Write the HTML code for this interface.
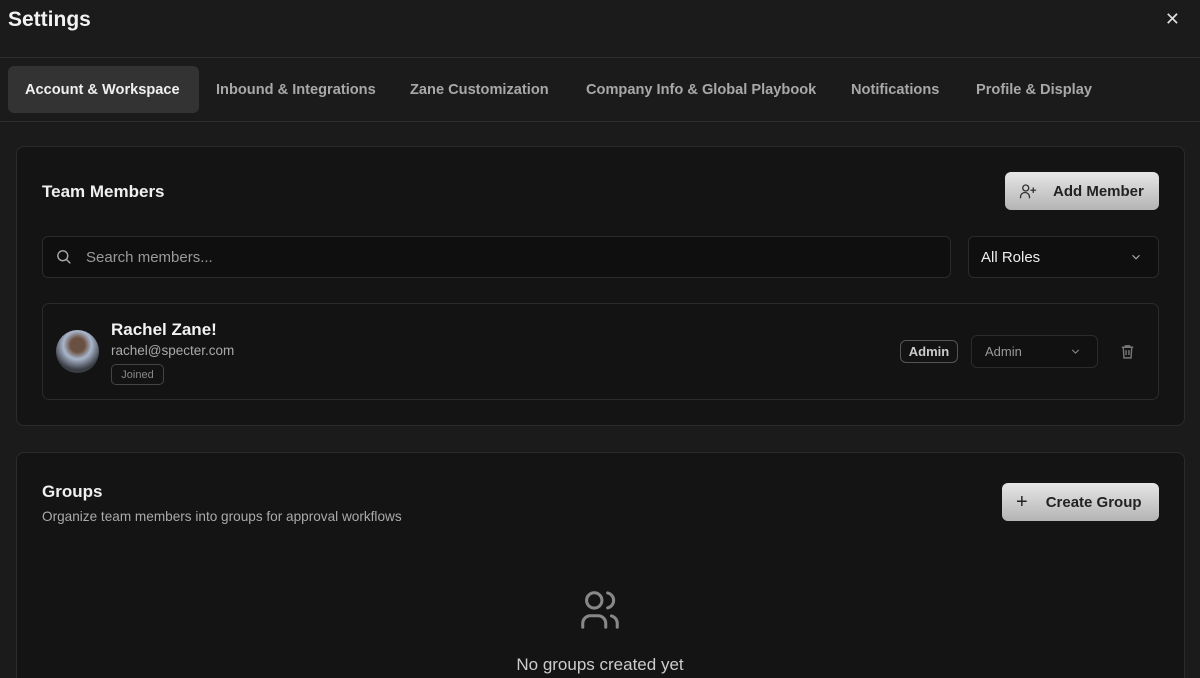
<!DOCTYPE html>
<html><head><style>
*{box-sizing:border-box;margin:0;padding:0}
html{width:1200px;height:678px;overflow:hidden}
body{width:1200px;height:678px;overflow:hidden;background:#1b1b1b;font-family:"Liberation Sans",Arial,sans-serif;color:#eee;position:relative}
.abs{position:absolute;white-space:nowrap}
.title{left:8px;top:8px;font-size:21px;font-weight:bold;color:#f2f2f2}
.close{right:20px;top:9px;font-size:18px;color:#ddd}
.hline{left:0;width:1200px;height:1px;background:#2e2e2e}
.tab{top:66px;height:47px;line-height:49px;font-size:14.6px;color:#a8a8a8;font-weight:bold}
.tab.act{background:#333;color:#f0f0f0;border-radius:6px;padding:0 17px}
.card{background:#141414;border:1px solid #2b2b2b;border-radius:8px}
.btn{background:linear-gradient(#e6e6e6,#b4b4b4);border-radius:6px;color:#222;font-size:15px;font-weight:bold;display:flex;align-items:center}
.input{background:#0f0f0f;border:1px solid #2b2b2b;border-radius:6px}
</style></head><body>
<div class="abs title">Settings</div>
<div class="abs close">✕</div>
<div class="abs hline" style="top:57px"></div>
<div class="abs hline" style="top:121px"></div>
<div class="abs tab act" style="left:8px;width:191px">Account &amp; Workspace</div>
<div class="abs tab" style="left:216px">Inbound &amp; Integrations</div>
<div class="abs tab" style="left:410px">Zane Customization</div>
<div class="abs tab" style="left:586px">Company Info &amp; Global Playbook</div>
<div class="abs tab" style="left:851px">Notifications</div>
<div class="abs tab" style="left:976px">Profile &amp; Display</div>

<div class="abs card" style="left:16px;top:146px;width:1169px;height:280px"></div>
<div class="abs" style="left:42px;top:182px;font-size:17px;font-weight:bold;color:#f0f0f0">Team Members</div>
<div class="abs btn" style="left:1005px;top:172px;width:154px;height:38px">
<svg style="margin-left:14px" width="18" height="18" viewBox="0 0 24 24" fill="none" stroke="#333" stroke-width="1.8" stroke-linecap="round"><circle cx="9" cy="8" r="4"/><path d="M2 21v-1a6 6 0 0 1 12 0v1M19 8v6M16 11h6"/></svg>
<span style="margin-left:16px">Add Member</span></div>
<div class="abs input" style="left:42px;top:236px;width:909px;height:42px"></div>
<svg class="abs" style="left:55px;top:248px" width="17" height="17" viewBox="0 0 24 24" fill="none" stroke="#aaa" stroke-width="2" stroke-linecap="round"><circle cx="11" cy="11" r="7"/><path d="M21 21l-5-5"/></svg>
<div class="abs" style="left:86px;top:249px;font-size:15px;color:#9a9a9a">Search members...</div>
<div class="abs input" style="left:968px;top:236px;width:191px;height:42px"></div>
<div class="abs" style="left:981px;top:249px;font-size:15px;color:#eee">All Roles</div>
<svg class="abs" style="left:1129px;top:250px" width="14" height="14" viewBox="0 0 24 24" fill="none" stroke="#aaa" stroke-width="2"><path d="M6 9l6 6 6-6"/></svg>

<div class="abs" style="left:42px;top:303px;width:1117px;height:97px;border:1px solid #2b2b2b;border-radius:7px;background:#131313"></div>
<div class="abs" style="left:56px;top:330px;width:43px;height:43px;border-radius:50%;background:radial-gradient(circle at 50% 35%,#6a5040 0 20%,#a9b6cc 40%,#3a3d44 70%)"></div>
<div class="abs" style="left:111px;top:320px;font-size:17px;font-weight:bold;color:#f2f2f2">Rachel Zane!</div>
<div class="abs" style="left:111px;top:343px;font-size:13.5px;color:#aaa">rachel@specter.com</div>
<div class="abs" style="left:111px;top:364px;width:53px;height:21px;border:1px solid #444;border-radius:5px;font-size:11px;color:#888;text-align:center;line-height:20px">Joined</div>
<div class="abs" style="left:900px;top:340px;width:58px;height:23px;border:1px solid #555;border-radius:6px;font-size:13px;font-weight:bold;color:#ccc;text-align:center;line-height:22px">Admin</div>
<div class="abs input" style="left:971px;top:335px;width:127px;height:33px;background:#111"></div>
<div class="abs" style="left:985px;top:344px;font-size:13px;color:#999">Admin</div>
<svg class="abs" style="left:1069px;top:345px" width="13" height="13" viewBox="0 0 24 24" fill="none" stroke="#888" stroke-width="2"><path d="M6 9l6 6 6-6"/></svg>
<svg class="abs" style="left:1119px;top:343px" width="17" height="17" viewBox="0 0 24 24" fill="none" stroke="#777" stroke-width="2"><path d="M4 6h16M9 6V4h6v2M6 6l1 15h10l1-15M10 10v7M14 10v7"/></svg>

<div class="abs card" style="left:16px;top:452px;width:1169px;height:240px"></div>
<div class="abs" style="left:42px;top:482px;font-size:17px;font-weight:bold;color:#f0f0f0">Groups</div>
<div class="abs" style="left:42px;top:509px;font-size:13.6px;color:#aaa">Organize team members into groups for approval workflows</div>
<div class="abs btn" style="left:1002px;top:483px;width:157px;height:38px">
<span style="margin-left:14px;font-size:20px;font-weight:normal">+</span><span style="margin-left:18px">Create Group</span></div>
<svg class="abs" style="left:575px;top:587px" width="50" height="46" viewBox="0 0 24 24" fill="none" stroke="#888" stroke-width="1.6" stroke-linecap="round"><circle cx="9" cy="7" r="4"/><path d="M3 21v-2a4 4 0 0 1 4-4h4a4 4 0 0 1 4 4v2M16 3.1a4 4 0 0 1 0 7.8M21 21v-2a4 4 0 0 0-3-3.9"/></svg>
<div class="abs" style="left:0;width:1200px;top:655px;text-align:center;font-size:17px;color:#ccc">No groups created yet</div>
</body></html>
